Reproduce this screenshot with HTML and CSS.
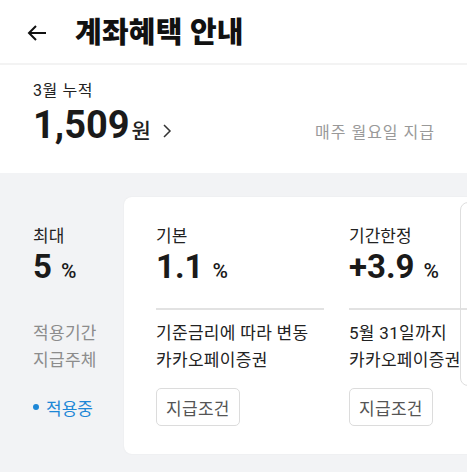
FILE: index.html
```html
<!DOCTYPE html>
<html>
<head>
    <title>계좌혜택 안내</title>
    <link rel="stylesheet" href="styles.css">
</head>
<body>
    <div class="header">
        <svg class="back" width="20" height="16" viewBox="0 0 20 16">
            <path d="M19 8H2M9 1L2 8l7 7" fill="none" stroke="#111" stroke-width="2"/>
        </svg>
        <h1>계좌혜택 안내</h1>
    </div>

    <div class="summary">
        <div class="month">3월 누적</div>
        <div class="amount-row">
            <span class="amount">1,509</span>
            <span class="won">원</span>
            <svg class="chevron" width="10" height="14" viewBox="0 0 10 14">
                <path d="M2 1l6 6-6 6" fill="none" stroke="#333" stroke-width="1.5"/>
            </svg>
            <span class="payday">매주 월요일 지급</span>
        </div>
    </div>

    <div class="benefits">
        <div class="col side">
            <div class="label">최대</div>
            <div class="value">5<span class="pct">%</span></div>
            <div class="rule"></div>
            <div class="lines muted">
                <div>적용기간</div>
                <div>지급주체</div>
            </div>
            <div class="status"><span class="dot"></span>적용중</div>
        </div>
        <div class="card">
            <div class="col">
                <div class="label">기본</div>
                <div class="value">1.1<span class="pct">%</span></div>
                <div class="rule"></div>
                <div class="lines">
                    <div>기준금리에 따라 변동</div>
                    <div>카카오페이증권</div>
                </div>
                <button class="cond">지급조건</button>
            </div>
            <div class="col">
                <div class="label">기간한정</div>
                <div class="value">+3.9<span class="pct">%</span></div>
                <div class="rule"></div>
                <div class="lines">
                    <div>5월 31일까지</div>
                    <div>카카오페이증권</div>
                </div>
                <button class="cond">지급조건</button>
            </div>
            <div class="next-card"></div>
        </div>
    </div>
</body>
</html>
```

FILE: styles.css
```css
body {
    margin: 0;
    width: 467px;
    height: 473px;
    overflow: hidden;
    background-color: #fff;
    font-family: Roboto, "Noto Sans CJK KR", sans-serif;
    color: #222;
}
.header {
    height: 59px;
    padding: 0 0 4px 27px;
    display: flex;
    align-items: center;
    border-bottom: 2px solid #f3f3f3;
}
.back {
    margin-top: 6px;
}
h1 {
    margin: 0 0 0 28px;
    font-size: 29px;
    font-weight: 900;
    color: #111;
    letter-spacing: 0.2px;
}
.summary {
    height: 94px;
    padding: 14px 32px 0 33px;
}
.month {
    font-size: 16px;
    line-height: 24px;
    letter-spacing: 0.6px;
}
.amount-row {
    display: flex;
    align-items: baseline;
    line-height: 44px;
}
.amount {
    font-size: 38px;
    font-weight: 700;
    color: #1a1a1a;
}
.won {
    font-size: 21px;
    font-weight: 500;
    margin-left: 2px;
}
.chevron {
    margin-left: 11px;
}
.payday {
    margin-left: auto;
    font-size: 16px;
    letter-spacing: 1px;
    color: #999;
}
.benefits {
    display: flex;
    background-color: #f2f3f5;
    padding: 24px 0 18px;
}
.col {
    padding: 27px 0 28px;
    width: 168px;
    flex-shrink: 0;
}
.col.side {
    width: 91px;
    padding-left: 33px;
}
.card {
    position: relative;
    flex-shrink: 0;
    width: 420px;
    display: flex;
    gap: 25px;
    padding-left: 32px;
    background-color: #fff;
    border-radius: 8px 0 0 8px;
    box-shadow: 0 0 2px rgba(0, 0, 0, 0.06);
}
.label {
    font-size: 17px;
    line-height: 24px;
    color: #222;
}
.value {
    font-size: 33px;
    line-height: 38px;
    font-weight: 700;
    color: #1a1a1a;
    white-space: nowrap;
}
.pct {
    font-size: 21px;
    font-weight: 500;
    margin-left: 9px;
}
.rule {
    margin-top: 18px;
    height: 2px;
    background-color: #e2e2e2;
}
.side .rule {
    background-color: transparent;
}
.lines {
    margin-top: 10px;
    font-size: 17px;
    line-height: 27px;
    letter-spacing: 0.3px;
    white-space: nowrap;
}
.muted {
    color: #8c8c8c;
}
.cond {
    display: block;
    margin-top: 14px;
    height: 38px;
    padding: 0 9px;
    background-color: #fff;
    border: 1px solid #dcdcdc;
    border-radius: 5px;
    font-family: inherit;
    font-size: 17px;
    letter-spacing: 0.3px;
    color: #555;
}
.status {
    margin-top: 14px;
    height: 38px;
    display: flex;
    align-items: center;
    font-size: 17px;
    color: #1d87d6;
}
.dot {
    width: 6px;
    height: 6px;
    border-radius: 50%;
    background-color: #1d87d6;
    margin-right: 7px;
}
.next-card {
    position: absolute;
    left: 336px;
    top: 5px;
    width: 60px;
    height: 182px;
    border: 1px solid #dedede;
    border-radius: 8px;
}
```
